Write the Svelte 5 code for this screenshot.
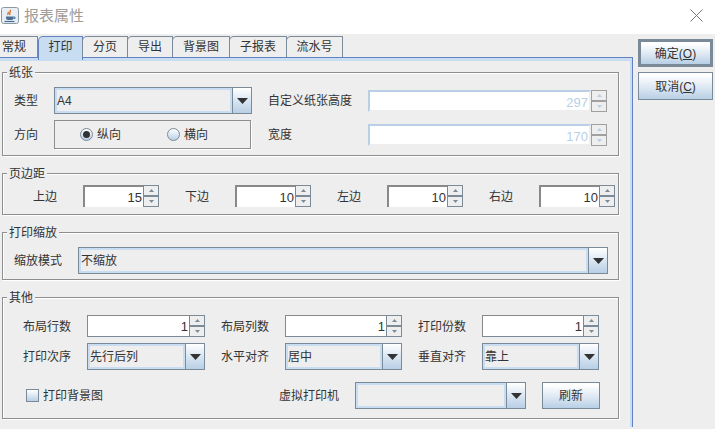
<script>
  const tabs = [
    { t: '常规', w: 38 }, { t: '打印', w: 45, sel: true }, { t: '分页', w: 46 }, { t: '导出', w: 46 },
    { t: '背景图', w: 58 }, { t: '子报表', w: 58 }, { t: '流水号', w: 57 }
  ];
  const margins = [['上边', '15'], ['下边', '10'], ['左边', '10'], ['右边', '10']];
</script>

{#snippet arrow()}
  <span class="arrowbtn"><svg width="11" height="6" viewBox="0 0 11 6"><path d="M0 0h11L5.5 6z" fill="#333"/></svg></span>
{/snippet}

{#snippet combo(text, cls)}
  <div class="combo {cls}"><span class="combotext">{text}</span>{@render arrow()}</div>
{/snippet}

{#snippet spin(value, cls)}
  <div class="spin {cls}">
    <span class="field">{value}</span>
    <span class="btns">
      <span class="sb"><svg width="5" height="3" viewBox="0 0 5 3"><path d="M2.5 0L5 3H0z"/></svg></span>
      <span class="sb"><svg width="5" height="3" viewBox="0 0 5 3"><path d="M0 0h5L2.5 3z"/></svg></span>
    </span>
  </div>
{/snippet}

<div class="win">
  <header class="title">
    <svg class="appicon" width="19" height="18" viewBox="0 0 19 18">
      <rect x="0.5" y="0.5" width="17" height="16" rx="2" fill="#e8eef2" stroke="#8a9aa5"/>
      <path d="M5 9.5h7.5v1.5q0 2-2 2H7q-2 0-2-2z" fill="#4a6f96"/>
      <path d="M12.5 10h1.5v1.5h-1.5" fill="none" stroke="#4a6f96"/>
      <path d="M3.5 14.5h10" stroke="#4a6f96" stroke-width="1.2"/>
      <path d="M9 3c1.5 1.5-1.5 2.5 0 5M7 5c1 1-.8 1.5 0 3" fill="none" stroke="#d8641c" stroke-width="1.3"/>
    </svg>
    <span class="titletext">报表属性</span>
    <svg class="close" width="13" height="13" viewBox="0 0 13 13"><path d="M.5.5l12 12M12.5.5l-12 12" stroke="#777" fill="none"/></svg>
  </header>

  <div class="body">
    <div class="left">
      <div class="tabs">
        {#each tabs as tab}
          <div class="tab" class:sel={tab.sel} style="width:{tab.w}px">{tab.t}</div>
        {/each}
      </div>
      <div class="panel">
        <section class="group paper">
          <span class="legend">纸张</span>
          <div class="papergrid">
            <span class="lab">类型</span>
            {@render combo('A4', 'ctype')}
            <span class="lab ind">自定义纸张高度</span>
            {@render spin('297', 'disabled')}
            <span class="lab">方向</span>
            <div class="radios">
              <span class="radio on"></span><span class="rtext">纵向</span>
              <span class="radio second"></span><span class="rtext">横向</span>
            </div>
            <span class="lab ind">宽度</span>
            {@render spin('170', 'disabled')}
          </div>
        </section>

        <section class="group margins">
          <span class="legend">页边距</span>
          <div class="marginrow">
            {#each margins as m}
              <span class="lab mlab">{m[0]}</span>
              {@render spin(m[1], 'msp')}
            {/each}
          </div>
        </section>

        <section class="group zoomg">
          <span class="legend">打印缩放</span>
          <div class="zoomrow">
            <span class="lab">缩放模式</span>
            {@render combo('不缩放', 'czoom')}
          </div>
        </section>

        <section class="group other">
          <span class="legend">其他</span>
          <div class="othergrid">
            <span class="lab">布局行数</span>{@render spin('1', 'osp')}
            <span class="lab ind">布局列数</span>{@render spin('1', 'osp')}
            <span class="lab ind">打印份数</span>{@render spin('1', 'osp')}
            <span class="lab">打印次序</span>{@render combo('先行后列', 'cother')}
            <span class="lab ind">水平对齐</span>{@render combo('居中', 'cother')}
            <span class="lab ind">垂直对齐</span>{@render combo('靠上', 'cother')}
          </div>
          <div class="lastrow">
            <span class="check"></span>
            <span class="lab chk">打印背景图</span>
            <span class="lab vp">虚拟打印机</span>
            {@render combo('', 'cvp')}
            <button class="btn refresh">刷新</button>
          </div>
        </section>
      </div>
    </div>
    <aside class="side">
      <button class="btn main default">确定(<u>O</u>)</button>
      <button class="btn main">取消(<u>C</u>)</button>
    </aside>
  </div>
</div>

<style>
  :global(body) { margin: 0; background: #eee; overflow: hidden; }
  .win {
    width: 715px; height: 429px; overflow: hidden; background: #eee; color: #333;
    font: 12px/16px "Liberation Sans", "Noto Sans CJK SC", sans-serif;
  }
  .title { height: 34px; background: #fff; display: flex; align-items: center; padding-left: 1px; }
  .appicon { margin-top: -3px; }
  .titletext { margin-left: 4px; margin-top: -3px; font-size: 15px; color: #a09c98; }
  .close { margin-left: auto; margin-right: 12px; margin-top: -3px; }

  .body { display: flex; }
  .left { width: 633px; }
  .tabs { display: flex; height: 21px; margin-top: 2px; position: relative; z-index: 1; }
  .tab {
    box-sizing: border-box; height: 21px; margin-left: -1px; text-align: center; line-height: 20px;
    border: 1px solid #7a8a99; border-bottom: 0; border-top-left-radius: 5px; background: #eee;
  }
  .tab:first-child { margin-left: 0; border-left: 0; border-radius: 0; text-align: left; padding-left: 2px; }
  .tab.sel { height: 24px; margin-left: 0; background: #c8ddf2; border-color: #6382bf; }

  .panel {
    height: 370px; box-sizing: border-box; padding: 14px 11px 0 2px; background: #eee;
    border-top: 1px solid #6382bf; border-right: 1px solid #6382bf;
    box-shadow: inset 0 3px 0 #c8ddf2, inset -2px 0 0 #c8ddf2;
  }
  .group {
    position: relative; box-sizing: border-box; width: 617px; margin-bottom: 17px;
    border: 1px solid #8e8e8e; box-shadow: 1px 1px 0 #fff, inset 1px 1px 0 #fff;
  }
  .legend { position: absolute; top: -8px; left: 4px; padding: 0 2px; background: #eee; line-height: 16px; }
  .lab { white-space: nowrap; padding-top: 1px; }
  .ind { padding-left: 16px; }

  .paper { height: 84px; padding: 14px 0 0 11px; }
  .papergrid { display: grid; grid-template-columns: 40px 198px 116px 239px; grid-template-rows: 27px 29px; row-gap: 6px; align-items: center; }
  .radios { box-sizing: border-box; width: 197px; height: 29px; border: 1px solid #8e8e8e; box-shadow: 1px 1px 0 #fff; display: flex; align-items: center; padding-left: 25px; }
  .radio {
    box-sizing: border-box; width: 13px; height: 13px; border-radius: 50%; border: 1px solid #7a8a99;
    background: linear-gradient(#fff, #b8cfe5); position: relative; flex: none;
  }
  .radio.on::after { content: ""; position: absolute; inset: 2px; border-radius: 50%; background: #333; }
  .radio.second { margin-left: 46px; }
  .rtext { margin-left: 4px; }

  .combo { box-sizing: border-box; display: flex; height: 27px; border: 1px solid #7a8a99; background: #eee; }
  .combotext { flex: 1; min-width: 0; box-shadow: inset 0 0 0 2px #c8ddf2; padding-left: 2px; line-height: 26px; border-right: 1px solid #7a8a99; }
  .arrowbtn { width: 18px; flex: none; display: flex; align-items: center; justify-content: center; background: linear-gradient(#fff, #dde8f3 45%, #b8cfe5); }

  .spin { display: flex; height: 22px; }
  .field {
    flex: 1; box-sizing: border-box; background: #fff; text-align: right; line-height: 21px; padding-right: 1px;
    border-top: 2px solid #888; border-left: 2px solid #888; font-size: 13px;
  }
  .btns { width: 16px; flex: none; display: flex; flex-direction: column; }
  .sb { box-sizing: border-box; flex: 1; border: 1px solid #7a8a99; display: flex; align-items: center; justify-content: center; background: #eee; }
  .sb svg { fill: #7a8a99; }
  .disabled .field { color: #b8cfe5; border: 2px solid; border-color: #b8cfe5 #eee #eee #b8cfe5; }
  .disabled .sb { border-color: #a0a0a0; }
  .disabled .sb svg { fill: #b8cfe5; }

  .margins { height: 42px; padding: 11px 0 0 30px; }
  .marginrow { display: flex; align-items: center; }
  .mlab { width: 50px; flex: none; }
  .msp { width: 76px; margin-right: 26px; flex: none; }

  .zoomg { height: 48px; padding: 14px 0 0 11px; }
  .zoomrow { display: grid; grid-template-columns: 64px 530px; align-items: center; }

  .other { height: 122px; padding: 17px 0 0 20px; }
  .othergrid { display: grid; grid-template-columns: 64px 118px 80px 117px 80px 117px; grid-template-rows: 22px 27px; row-gap: 6px; align-items: center; }
  .osp .field { border-bottom: 1px solid #7a8a99; border-left-width: 1px; border-top-width: 1px; }
  .lastrow { display: flex; align-items: center; height: 27px; margin-top: 12px; }
  .check {
    box-sizing: border-box; width: 13px; height: 13px; margin-left: 3px; flex: none;
    border: 1px solid #7a8a99; background: linear-gradient(#fff, #b8cfe5);
  }
  .chk { margin-left: 4px; }
  .vp { margin-left: 176px; }
  .lastrow :global(.combo) { width: 171px; margin-left: 16px; flex: none; }
  .lastrow .btn { margin-left: 16px; }

  .btn {
    box-sizing: border-box; border: 1px solid #7a8a99; padding: 1px 0 0; color: #333; font: inherit;
    background: linear-gradient(#fff 8%, #dde8f3 55%, #b8cfe5);
  }
  .refresh { width: 58px; height: 27px; }
  .side { display: flex; flex-direction: column; gap: 5px; margin: 5px 0 0 5px; }
  .main { width: 75px; height: 28px; }
  .default { border-width: 3px; }
</style>
